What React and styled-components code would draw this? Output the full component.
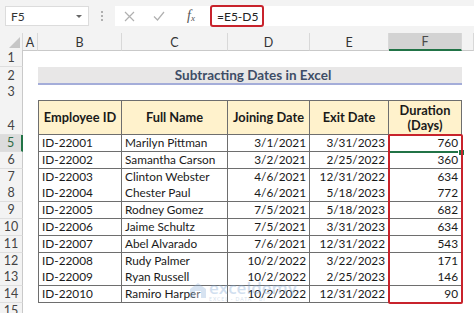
import React from 'react';
import styled, { createGlobalStyle } from 'styled-components';

const GlobalStyle = createGlobalStyle`
  body {
    margin: 0;
    font-family: Lato, "Open Sans", sans-serif;
    background: #fff;
  }
`;

const COLS = '23px 15px 84px 106px 82px 79px 73px 12px';

const Page = styled.div`
  width: 474px;
  height: 313px;
  overflow: hidden;
  background: #fff;
  display: flex;
  flex-direction: column;
`;

const Toolbar = styled.div`
  height: 33px;
  flex: none;
  background: #f3f3f3;
  display: flex;
  align-items: flex-start;
  padding: 6px 0 0 5px;
  box-sizing: border-box;
`;

const NameBox = styled.div`
  width: 84px;
  height: 20px;
  box-sizing: border-box;
  background: #fff;
  border: 1px solid #dcdcdc;
  display: flex;
  align-items: center;
  justify-content: space-between;
  padding: 0 6px 0 5px;
  font-size: 12px;
  color: #333;
`;

const Caret = styled.span`
  width: 0;
  height: 0;
  border-left: 3px solid transparent;
  border-right: 3px solid transparent;
  border-top: 3px solid #666;
`;

const Dots = styled.div`
  width: 26px;
  height: 20px;
  display: flex;
  flex-direction: column;
  align-items: center;
  justify-content: center;
  gap: 2px;

  span {
    width: 2px;
    height: 2px;
    border-radius: 1px;
    background: #9a9a9a;
  }
`;

const FuncBox = styled.div`
  width: 92px;
  height: 20px;
  background: #fff;
  display: flex;
  align-items: center;
  padding-left: 9px;
  box-sizing: border-box;
  gap: 18px;
`;

const Fx = styled.span`
  font-family: "Liberation Serif", serif;
  font-style: italic;
  font-size: 14px;
  color: #555;
  margin-left: 4px;

  sub {
    font-size: 9px;
    vertical-align: -1px;
  }
`;

const FormulaBox = styled.div`
  flex: 1;
  height: 20px;
  background: #fff;
  display: flex;
  align-items: center;
  padding-left: 3px;
`;

const Highlight = styled.span`
  height: 22px;
  box-sizing: border-box;
  border: 2px solid #c8232c;
  border-radius: 3px;
  display: inline-flex;
  align-items: center;
  padding: 0 4px 0 5px;
  font-size: 12px;
  color: #222;
`;

const Sheet = styled.div`
  position: relative;
  flex: 1;
  display: flex;
  flex-direction: column;
`;

const Row = styled.div`
  display: grid;
  grid-template-columns: ${COLS};
  height: ${(p) => p.$h}px;
  flex: none;
`;

const ColHead = styled.div`
  background: ${(p) => (p.$sel ? '#d3d3d3' : '#f3f3f3')};
  border-right: 1px solid #d8d8d8;
  border-bottom: ${(p) => (p.$sel ? '2px solid #217346' : '1px solid #c9c9c9')};
  box-sizing: border-box;
  display: flex;
  align-items: center;
  justify-content: center;
  font-size: 12.5px;
  color: ${(p) => (p.$sel ? '#4a4a4a' : '#333')};
  padding-top: 1px;
`;

const Corner = styled(ColHead)`
  justify-content: flex-end;
  align-items: flex-end;
  padding: 0 2px 2px 0;

  span {
    width: 0;
    height: 0;
    border-left: 11px solid transparent;
    border-bottom: 11px solid #c6c6c6;
  }
`;

const RowHead = styled.div`
  background: ${(p) => (p.$sel ? '#dcdcdc' : '#f3f3f3')};
  border-right: ${(p) => (p.$sel ? '2px solid #217346' : '1px solid #c9c9c9')};
  border-bottom: 1px solid #dedede;
  box-sizing: border-box;
  display: flex;
  align-items: flex-end;
  justify-content: center;
  padding-bottom: 1px;
  font-size: 12.5px;
  color: ${(p) => (p.$sel ? '#2f6b45' : '#444')};
`;

const Blank = styled.div``;

const Title = styled.div`
  grid-column: 3 / 8;
  background: #e8e7e7;
  border-bottom: 2px solid #a4add9;
  display: flex;
  align-items: center;
  justify-content: center;
  font-weight: 700;
  font-size: 13.5px;
  color: #3e4d66;
  padding-left: 6px;
`;

const Cell = styled.div`
  box-sizing: border-box;
  border-right: 1px solid #6e6e6e;
  border-bottom: 1px solid #6e6e6e;
  border-left: ${(p) => (p.$first ? '1px solid #6e6e6e' : 'none')};
  border-top: ${(p) => (p.$top ? '1px solid #6e6e6e' : 'none')};
  background: ${(p) => (p.$head ? '#fff2cc' : '#fff')};
  display: flex;
  align-items: ${(p) => (p.$head ? 'center' : 'flex-end')};
  justify-content: ${(p) =>
    p.$head ? 'center' : p.$right ? 'flex-end' : 'flex-start'};
  text-align: center;
  padding: ${(p) => (p.$head ? '0' : '0 3px 1px 3px')};
  font-size: ${(p) => (p.$head ? '12.8px' : '11.8px')};
  font-weight: ${(p) => (p.$head ? 700 : 400)};
  line-height: ${(p) => (p.$head ? '15px' : '14px')};
  color: #1a1a1a;
  white-space: nowrap;
`;

const ColumnMark = styled.div`
  position: absolute;
  left: 388px;
  top: 101px;
  width: 75px;
  height: 170px;
  box-sizing: border-box;
  border: 2px solid #c8232c;
  border-radius: 2px;
  pointer-events: none;
`;

const SelectLine = styled.div`
  position: absolute;
  left: 390px;
  top: 118px;
  width: 71px;
  height: 2px;
  background: #217346;
`;

const FillHandle = styled.div`
  position: absolute;
  left: 458px;
  top: 116px;
  width: 5px;
  height: 5px;
  background: #217346;
  border: 1px solid #fff;
`;

const Watermark = styled.div`
  position: absolute;
  left: 190px;
  top: 246px;
  display: flex;
  align-items: center;
  gap: 3px;
  opacity: 0.35;
  pointer-events: none;
`;

const MarkText = styled.div`
  display: flex;
  flex-direction: column;
  line-height: 1;

  b {
    font-family: "Open Sans", sans-serif;
    font-size: 17px;
    font-weight: 600;
    color: #7ea6d4;
  }

  small {
    font-size: 5px;
    letter-spacing: 1px;
    color: #8aa9cc;
    margin-top: 1px;
  }
`;

const columns = ['A', 'B', 'C', 'D', 'E', 'F'];

const employees = [
  ['ID-22001', 'Marilyn Pittman', '3/1/2021', '3/31/2023', 760],
  ['ID-22002', 'Samantha Carson', '3/2/2021', '2/25/2022', 360],
  ['ID-22003', 'Clinton Webster', '4/6/2021', '12/31/2022', 634],
  ['ID-22004', 'Chester Paul', '4/6/2021', '5/18/2023', 772],
  ['ID-22005', 'Rodney Gomez', '7/5/2021', '5/18/2023', 682],
  ['ID-22006', 'Jaime Schultz', '7/5/2021', '3/31/2023', 634],
  ['ID-22007', 'Abel Alvarado', '7/6/2021', '12/31/2022', 543],
  ['ID-22008', 'Rudy Palmer', '10/2/2022', '3/22/2023', 171],
  ['ID-22009', 'Ryan Russell', '10/2/2022', '2/25/2023', 146],
  ['ID-22010', 'Ramiro Harper', '10/2/2022', '12/31/2022', 90],
];

const Cross = () => (
  <svg width="11" height="11" viewBox="0 0 11 11">
    <path d="M1 1L10 10M10 1L1 10" stroke="#b0b0b0" strokeWidth="1.2" fill="none" />
  </svg>
);

const Check = () => (
  <svg width="12" height="10" viewBox="0 0 12 10">
    <path d="M1 5.5L4.5 9L11 1" stroke="#b0b0b0" strokeWidth="1.2" fill="none" />
  </svg>
);

const Logo = () => (
  <svg width="16" height="15" viewBox="0 0 16 15">
    <path d="M8 0L16 6V15H0V6Z" fill="#8fb1d9" />
    <path d="M5 8H11V15H5Z" fill="#fff" />
  </svg>
);

export default function App() {
  return (
    <Page>
      <GlobalStyle />
      <Toolbar>
        <NameBox>
          F5
          <Caret />
        </NameBox>
        <Dots>
          <span />
          <span />
          <span />
        </Dots>
        <FuncBox>
          <Cross />
          <Check />
          <Fx>
            f<sub>x</sub>
          </Fx>
        </FuncBox>
        <FormulaBox>
          <Highlight>=E5-D5</Highlight>
        </FormulaBox>
      </Toolbar>

      <Sheet>
        <Row $h={17}>
          <Corner>
            <span />
          </Corner>
          {columns.map((c) => (
            <ColHead key={c} $sel={c === 'F'}>
              {c}
            </ColHead>
          ))}
          <ColHead />
        </Row>

        <Row $h={17}>
          <RowHead>1</RowHead>
        </Row>
        <Row $h={17}>
          <RowHead>2</RowHead>
          <Blank />
          <Title>Subtracting Dates in Excel</Title>
        </Row>
        <Row $h={16}>
          <RowHead>3</RowHead>
        </Row>
        <Row $h={35}>
          <RowHead>4</RowHead>
          <Blank />
          <Cell $head $top $first>Employee ID</Cell>
          <Cell $head $top>Full Name</Cell>
          <Cell $head $top>Joining Date</Cell>
          <Cell $head $top>Exit Date</Cell>
          <Cell $head $top>
            Duration
            <br />
            (Days)
          </Cell>
        </Row>

        {employees.map(([id, name, join, exit, days], i) => (
          <Row key={id} $h={16.8}>
            <RowHead $sel={i === 0}>{i + 5}</RowHead>
            <Blank />
            <Cell $first>{id}</Cell>
            <Cell>{name}</Cell>
            <Cell $right>{join}</Cell>
            <Cell $right>{exit}</Cell>
            <Cell $right>{days}</Cell>
          </Row>
        ))}

        <Row $h={17}>
          <RowHead>15</RowHead>
        </Row>

        <SelectLine />
        <FillHandle />
        <ColumnMark />
        <Watermark>
          <Logo />
          <MarkText>
            <b>exceldemy</b>
            <small>EXCEL · DATA · BI</small>
          </MarkText>
        </Watermark>
      </Sheet>
    </Page>
  );
}
